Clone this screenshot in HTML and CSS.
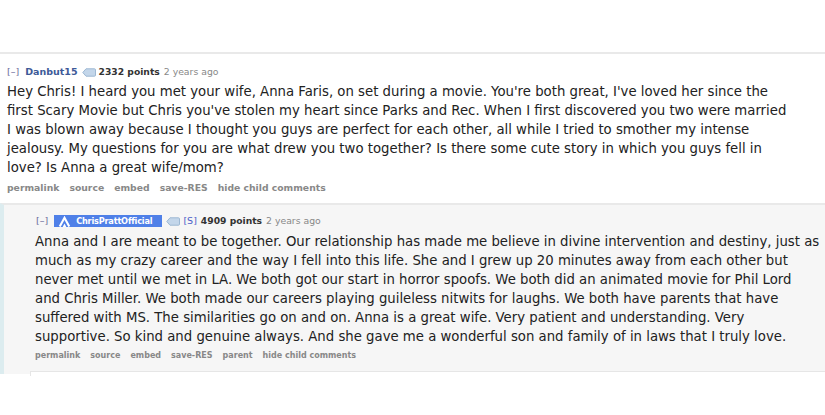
FILE: index.html
```html
<!DOCTYPE html>
<html lang="en">
<head>
<meta charset="utf-8">
<title>Comment thread</title>
<link rel="stylesheet" href="styles.css">
</head>
<body>
<main class="thread">
  <article class="comment">
    <header class="meta">
      <span class="toggle">[–]</span>
      <a class="author">Danbut15</a>
      <svg class="tag" viewBox="0 0 14 9"><path d="M.8 4.500 4 .8h8.500a1 1 0 0 1 1 1v5.400a1 1 0 0 1-1 1H4z" fill="#c3d6ea" stroke="#9db8d3"/></svg>
      <strong class="score">2332 points</strong>
      <span class="time">2 years ago</span>
    </header>
    <p class="body">Hey Chris! I heard you met your wife, Anna Faris, on set during a movie. You're both great, I've loved her since the<br>first Scary Movie but Chris you've stolen my heart since Parks and Rec. When I first discovered you two were married<br>I was blown away because I thought you guys are perfect for each other, all while I tried to smother my intense<br>jealousy. My questions for you are what drew you two together? Is there some cute story in which you guys fell in<br>love? Is Anna a great wife/mom?</p>
    <nav class="actions">
      <a>permalink</a><a>source</a><a>embed</a><a>save-RES</a><a>hide child comments</a>
    </nav>
  </article>
  <article class="reply">
    <header class="meta">
      <span class="toggle">[–]</span>
      <a class="author-op">
        <svg class="logo" viewBox="0 0 14 12"><path d="M1.800 11.500 7 2l5.200 9.500" fill="none" stroke="#fff" stroke-width="2.300"/><path d="M7 8.200 9 12H5z" fill="#fff"/></svg>
        ChrisPrattOfficial
      </a>
      <svg class="tag" viewBox="0 0 14 9"><path d="M.8 4.500 4 .8h8.500a1 1 0 0 1 1 1v5.400a1 1 0 0 1-1 1H4z" fill="#c3d6ea" stroke="#9db8d3"/></svg>
      <span class="submitter">[S]</span>
      <strong class="score">4909 points</strong>
      <span class="time">2 years ago</span>
    </header>
    <p class="body">Anna and I are meant to be together. Our relationship has made me believe in divine intervention and destiny, just as<br>much as my crazy career and the way I fell into this life. She and I grew up 20 minutes away from each other but<br>never met until we met in LA. We both got our start in horror spoofs. We both did an animated movie for Phil Lord<br>and Chris Miller. We both made our careers playing guileless nitwits for laughs. We both have parents that have<br>suffered with MS. The similarities go on and on. Anna is a great wife. Very patient and understanding. Very<br>supportive. So kind and genuine always. And she gave me a wonderful son and family of in laws that I truly love.</p>
    <nav class="actions small">
      <a>permalink</a><a>source</a><a>embed</a><a>save-RES</a><a>parent</a><a>hide child comments</a>
    </nav>
    <div class="child"></div>
  </article>
</main>
</body>
</html>
```

FILE: styles.css
```css
* { box-sizing: border-box; }
html, body { margin: 0; background: #fff; }
body { width: 825px; height: 415px; overflow: hidden; font-family: "DejaVu Sans", Verdana, sans-serif; color: #222; }
.thread { padding-top: 52px; }
.comment { border-top: 2px solid #e9e9e9; padding: 11px 0 0 7px; height: 152px; }
.meta { display: flex; align-items: center; gap: 4px; height: 14px; font-size: 9.500px; line-height: 14px; color: #888; white-space: nowrap; }
.toggle { color: #6a6a9a; margin-right: 2px; }
.author { color: #3d5a98; font-weight: bold; }
.author-op { display: flex; align-items: center; gap: 4px; height: 12px; padding: 0 10px 0 3px; background: #4f80e8; color: #fff; font-weight: bold; font-size: 8.200px; letter-spacing: -.2px; }
.logo { width: 15px; height: 11px; }
.tag { width: 14px; height: 9px; margin: 0 -1px 0 0; }
.submitter { color: #4a60c8; }
.score { color: #333; font-size: 9.200px; }
.time { color: #888; font-size: 9.300px; }
.body { margin: 3px 0 0; font-size: 13.270px; line-height: 19px; color: #222; white-space: nowrap; }
.actions { display: flex; gap: 10px; margin-top: 4px; font-size: 9.250px; line-height: 14px; font-weight: bold; color: #888; }
.reply { position: relative; height: 171px; margin-top: -1px; background: #f6f6f6; border-top: 2px solid #e9e9e9; border-left: 4px solid #dcecef; padding: 9px 0 0 31px; }
.reply .meta { margin-left: 1px; }
.reply .body { margin-top: 4px; }
.actions.small { font-size: 8px; margin-top: 3px; }
.child { position: absolute; left: 26px; right: 0; top: 166px; height: 5px; background: #fff; border-top: 1px solid #e6e6e6; border-left: 1px solid #e6e6e6; }
```
